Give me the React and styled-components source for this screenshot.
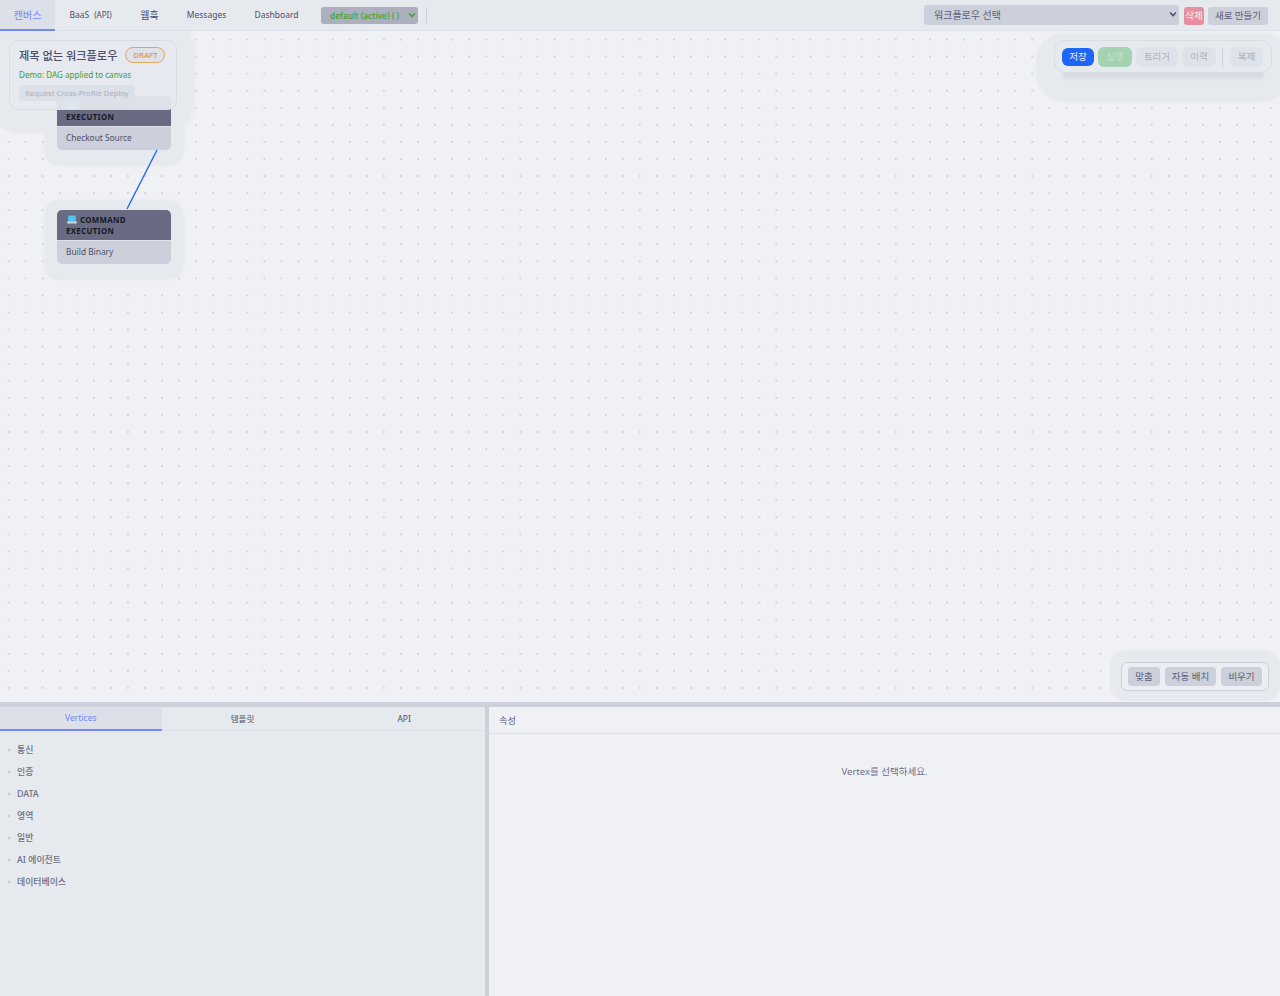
import React from "react";
import styled, { createGlobalStyle } from "styled-components";

const Global = createGlobalStyle`
  html, body { margin: 0; padding: 0; height: 100%; background: #eff1f5; }
  #root { height: 996px; }
  * { box-sizing: border-box; }
  body { font-family: "Noto Sans", "Noto Sans CJK KR", sans-serif; color: #4c4f69; overflow: hidden; }
`;

const Page = styled.div`
  height: 996px; width: 1280px; display: flex; flex-direction: column; overflow: hidden;
`;
const TopBar = styled.header`
  height: 31px; flex: none; display: flex; align-items: stretch; background: #e6e9ee;
  border-bottom: 1px solid #dce0e8; padding-right: 12px;
`;
const NavTab = styled.div`
  display: flex; align-items: center; justify-content: center; height: 31px; white-space: nowrap;
  width: ${p => p.$w}px; font-size: ${p => p.$size || 8.5}px; padding-bottom: 1px;
  color: ${p => (p.$active ? "#7287fd" : "#4c4f69")};
  background: ${p => (p.$active ? "#dce0e8" : "transparent")};
  border-bottom: 2px solid ${p => (p.$active ? "#7287fd" : "transparent")};
  small { font-size: 8px; margin-left: 5px; }
`;
const ProfileSelect = styled.div`
  margin: 7px 0 0 8px; width: 97px; height: 17px; border-radius: 3px; background: #acb0be;
  color: #40a02b; font-size: 8.4px; font-weight: 500; display: flex; align-items: center;
  justify-content: space-between; padding: 0 1px 1px 9px; white-space: nowrap;
`;
const VRule = styled.span`
  width: 1px; height: 16px; margin: 7px 0 0 8px; background: #ccd0da;
`;
const Spacer = styled.div` flex: 1; `;
const WorkflowSelect = styled.div`
  margin-top: 5px; width: 255px; height: 20px; border-radius: 3px; background: #ccd0da;
  color: #5c5f77; font-size: 10px; display: flex; align-items: center;
  justify-content: space-between; padding: 0 1px 2px 10px;
`;
const BarButton = styled.div`
  margin: 7px 0 0 ${p => p.$ml}px; width: ${p => p.$w}px; height: 18px; border-radius: 3px;
  background: ${p => (p.$danger ? "#e68fa0" : "#ccd0da")};
  color: ${p => (p.$danger ? "#eff1f5" : "#5c5f77")};
  font-size: 9.5px; display: flex; align-items: center; justify-content: center; padding-bottom: 2px;
`;
const Canvas = styled.main`
  position: relative; height: 671px; flex: none; overflow: hidden; background-color: #eff1f5;
  background-image: radial-gradient(circle at center, #b4b8c6 0.5px, transparent 0.85px);
  background-size: 17.07px 17.07px;
`;
const Edge = styled.svg`
  position: absolute; left: 0; top: 0; width: 300px; height: 300px; pointer-events: none;
`;
const PanelHalo = styled.div`
  position: absolute; left: -12px; top: -12px; width: 207px; height: 114px; border-radius: 30px;
  background: #e6e9ee; filter: blur(1px);
`;
const Node = styled.div`
  position: absolute; left: 57px; top: ${p => p.$top}px; width: 114px; height: 54px;
  border-radius: 5px; background: #ccd0da;
  box-shadow: 0 3px 2px 13px #e6e9ee;
  display: flex; flex-direction: column; overflow: hidden;
`;
const NodeHead = styled.div`
  height: 31px; flex: none; padding: 5px 9px 0; background: #686b82; color: #181926;
  border-bottom: 1px solid #dce0e8; font-size: 7.9px; font-weight: 700; line-height: 10.5px;
  letter-spacing: .3px; svg { vertical-align: -1px; margin: 0 3px 0 1px; }
`;
const NodeBody = styled.div`
  flex: 1; padding: 0 9px; font-size: 8.35px; line-height: 22px; color: #4c4f69;
`;
const InfoPanel = styled.section`
  position: absolute; left: 9px; top: 9px; width: 168px; height: 70px; padding: 6px 9px;
  border: 1px solid #d8dce4; border-radius: 9px; background: rgba(230,233,238,.95);
`;
const TitleRow = styled.div`
  display: flex; align-items: center; gap: 8px; height: 16px; font-size: 11.2px; font-weight: 500;
  color: #4c4f69;
`;
const DraftBadge = styled.span`
  width: 40px; height: 16px; border: 1px solid #e5a85a; border-radius: 8px; color: #e0963a;
  font-size: 7.9px; font-weight: 500; display: flex; align-items: center; justify-content: center;
  background: #dfe2e9;
`;
const Status = styled.div`
  margin-top: 6px; font-size: 8.1px; line-height: 12px; color: #40a02b;
`;
const DeployButton = styled.div`
  margin-top: 4px; width: 116px; height: 16px; border-radius: 3px; background: #dce0e8;
  color: #acb0be; font-size: 7.65px; display: flex; align-items: center; justify-content: center;
  padding-bottom: 1px;
`;
const ActionPanel = styled.section`
  position: absolute; right: 8px; top: 9px; width: 218px; height: 33px; padding: 0 7px;
  display: flex; align-items: center; gap: 4px; border: 1px solid #d8dce4; border-radius: 11px;
  background: #e6e9ee; box-shadow: 0 15px 3px -9px #d8dbe3, 0 11px 2px 18px #e6e9ee;
`;
const ActionButton = styled.div`
  width: ${p => p.$w}px; height: ${p => (p.$primary ? 18 : 20)}px; border-radius: 6px;
  background: ${p => (p.$primary ? "#1e66f5" : p.$run ? "#a3d3b1" : "#dfe2e9")};
  color: ${p => (p.$primary ? "#eff1f5" : p.$run ? "#c5e0cd" : "#acb0be")};
  font-size: 9.5px; display: flex; align-items: center; justify-content: center; padding-bottom: 2px;
`;
const ActionRule = styled.span`
  width: 1px; height: 20px; margin: 0 3px 0 2px; background: #ccd0da;
`;
const ViewPanel = styled.section`
  position: absolute; right: 11px; bottom: 11px; width: 148px; height: 29px; padding: 0 6px;
  display: flex; align-items: center; gap: 5px; border: 1px solid #ccd0da; border-radius: 6px;
  background: #eceef3; box-shadow: 0 -1px 0 11px #e6e9ee;
`;
const ViewButton = styled.div`
  width: ${p => p.$w}px; height: 19px; border-radius: 4px; background: #ccd0da; color: #5c5f77;
  font-size: 9.5px; display: flex; align-items: center; justify-content: center; padding-bottom: 2px;
`;
const Splitter = styled.div` height: 5px; flex: none; background: #ccd0da; `;
const Bottom = styled.div` flex: 1; display: flex; min-height: 0; `;
const LeftPane = styled.div` width: 485px; flex: none; background: #e6e9ee; `;
const PaneDivider = styled.div` width: 4px; flex: none; background: #ccd0da; `;
const RightPane = styled.div` flex: 1; background: #eff1f5; display: flex; flex-direction: column; `;
const Tabs = styled.div` display: grid; grid-template-columns: repeat(3, 1fr); height: 24px; `;
const Tab = styled.div`
  display: flex; align-items: center; justify-content: center; font-size: 8.5px;
  padding-bottom: 1px; color: ${p => (p.$active ? "#7287fd" : "#4c4f69")};
  background: ${p => (p.$active ? "#dce0e8" : "transparent")};
  border-bottom: ${p => (p.$active ? "2px solid #7287fd" : "1px solid #dce0e8")};
`;
const Tree = styled.div` padding-top: 8px; `;
const TreeRow = styled.div`
  height: 22px; padding: 0 0 1px 8px; display: flex; align-items: center; gap: 5px;
  font-size: 8.9px; font-weight: 500; color: #6c6f85;
  i { font-style: normal; font-size: 7px; color: #9ca0b0; width: 4px; }
`;
const PropsHeader = styled.div`
  height: 27px; flex: none; padding: 0 10px; display: flex; align-items: center; font-size: 9.2px;
  color: #5c5f77; border-bottom: 1px solid #dce0e8;
`;
const Empty = styled.div`
  padding-top: 31px; text-align: center; font-size: 9.5px; line-height: 14px; color: #6c6f85;
`;

const Chevron = ({ color = "#4c4f69" }) => (
  <svg width="10" height="10" viewBox="0 0 10 10" fill="none">
    <path d="M2 3.5 5 6.5 8 3.5" stroke={color} strokeWidth="1.6" />
  </svg>
);
const Laptop = () => (
  <svg width="10" height="9" viewBox="0 0 10 9">
    <rect x="1.2" y="0.5" width="7.6" height="5.6" rx=".6" fill="#4fc3f7" />
    <rect x="0.2" y="6.2" width="9.6" height="2.2" rx=".5" fill="#cfd8dc" />
  </svg>
);

const tree = ["통신", "인증", "DATA", "영역", "일반", "AI 에이전트", "데이터베이스"];

export default function App() {
  return (
    <Page>
      <Global />
      <TopBar>
        <NavTab $w={55} $size={10.2} $active>캔버스</NavTab>
        <NavTab $w={71}>BaaS<small>(API)</small></NavTab>
        <NavTab $w={47} $size={10}>웹훅</NavTab>
        <NavTab $w={67}>Messages</NavTab>
        <NavTab $w={73}>Dashboard</NavTab>
        <ProfileSelect>default (active) ( )<Chevron color="#40a02b" /></ProfileSelect>
        <VRule />
        <Spacer />
        <WorkflowSelect>워크플로우 선택<Chevron /></WorkflowSelect>
        <BarButton $ml={5} $w={20} $danger>삭제</BarButton>
        <BarButton $ml={4} $w={60}>새로 만들기</BarButton>
      </TopBar>
      <Canvas>
        <PanelHalo />
        <Node $top={65}>
          <NodeHead><Laptop />COMMAND EXECUTION</NodeHead>
          <NodeBody>Checkout Source</NodeBody>
        </Node>
        <Node $top={179}>
          <NodeHead><Laptop />COMMAND EXECUTION</NodeHead>
          <NodeBody>Build Binary</NodeBody>
        </Node>
        <Edge viewBox="0 0 300 300">
          <line x1="157" y1="119" x2="127" y2="178" stroke="#1e66f5" strokeWidth="1.4" />
        </Edge>
        <InfoPanel>
          <TitleRow>제목 없는 워크플로우<DraftBadge>DRAFT</DraftBadge></TitleRow>
          <Status>Demo: DAG applied to canvas</Status>
          <DeployButton>Request Cross-Profile Deploy</DeployButton>
        </InfoPanel>
        <ActionPanel>
          <ActionButton $w={32} $primary>저장</ActionButton>
          <ActionButton $w={34} $run>실행</ActionButton>
          <ActionButton $w={42}>트리거</ActionButton>
          <ActionButton $w={34}>이력</ActionButton>
          <ActionRule />
          <ActionButton $w={33}>복제</ActionButton>
        </ActionPanel>
        <ViewPanel>
          <ViewButton $w={32}>맞춤</ViewButton>
          <ViewButton $w={51}>자동 배치</ViewButton>
          <ViewButton $w={41}>비우기</ViewButton>
        </ViewPanel>
      </Canvas>
      <Splitter />
      <Bottom>
        <LeftPane>
          <Tabs>
            <Tab $active>Vertices</Tab>
            <Tab>템플릿</Tab>
            <Tab>API</Tab>
          </Tabs>
          <Tree>
            {tree.map(t => <TreeRow key={t}><i>›</i>{t}</TreeRow>)}
          </Tree>
        </LeftPane>
        <PaneDivider />
        <RightPane>
          <PropsHeader>속성</PropsHeader>
          <Empty>Vertex를 선택하세요.</Empty>
        </RightPane>
      </Bottom>
    </Page>
  );
}
